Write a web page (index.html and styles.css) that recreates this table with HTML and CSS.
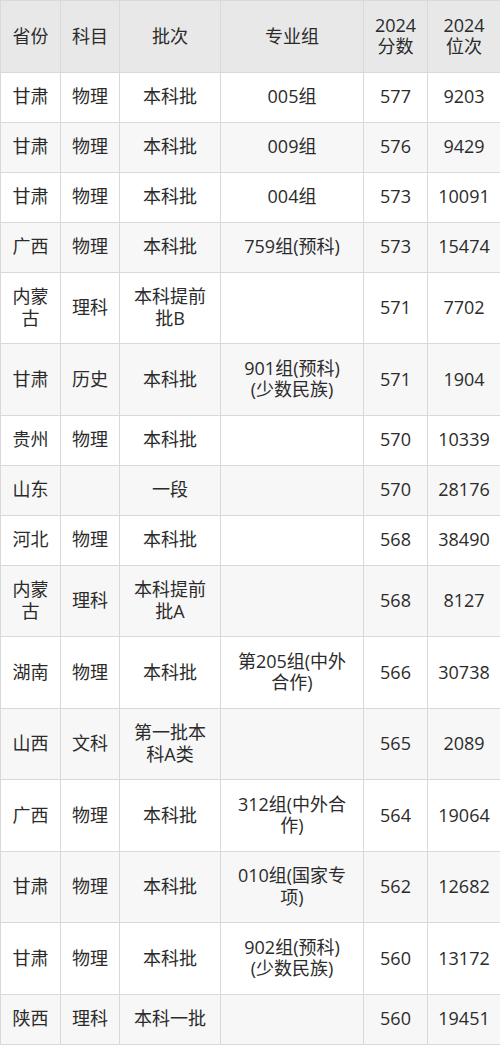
FILE: index.html
```html
<!DOCTYPE html>
<html lang="zh-CN">
<head>
<meta charset="utf-8">
<title>分数位次</title>
<link rel="stylesheet" href="styles.css">
</head>
<body>
<table class="score-table">
  <colgroup>
    <col class="c-prov"><col class="c-subj"><col class="c-batch"><col class="c-group"><col class="c-score"><col class="c-rank">
  </colgroup>
  <thead>
    <tr><th>省份</th><th>科目</th><th>批次</th><th>专业组</th><th>2024<br>分数</th><th>2024<br>位次</th></tr>
  </thead>
  <tbody>
    <tr><td>甘肃</td><td>物理</td><td>本科批</td><td>005组</td><td>577</td><td>9203</td></tr>
    <tr><td>甘肃</td><td>物理</td><td>本科批</td><td>009组</td><td>576</td><td>9429</td></tr>
    <tr><td>甘肃</td><td>物理</td><td>本科批</td><td>004组</td><td>573</td><td>10091</td></tr>
    <tr><td>广西</td><td>物理</td><td>本科批</td><td>759组(预科)</td><td>573</td><td>15474</td></tr>
    <tr><td>内蒙<br>古</td><td>理科</td><td>本科提前<br>批B</td><td></td><td>571</td><td>7702</td></tr>
    <tr><td>甘肃</td><td>历史</td><td>本科批</td><td>901组(预科)<br>(少数民族)</td><td>571</td><td>1904</td></tr>
    <tr><td>贵州</td><td>物理</td><td>本科批</td><td></td><td>570</td><td>10339</td></tr>
    <tr><td>山东</td><td></td><td>一段</td><td></td><td>570</td><td>28176</td></tr>
    <tr><td>河北</td><td>物理</td><td>本科批</td><td></td><td>568</td><td>38490</td></tr>
    <tr><td>内蒙<br>古</td><td>理科</td><td>本科提前<br>批A</td><td></td><td>568</td><td>8127</td></tr>
    <tr><td>湖南</td><td>物理</td><td>本科批</td><td>第205组(中外<br>合作)</td><td>566</td><td>30738</td></tr>
    <tr><td>山西</td><td>文科</td><td>第一批本<br>科A类</td><td></td><td>565</td><td>2089</td></tr>
    <tr><td>广西</td><td>物理</td><td>本科批</td><td>312组(中外合<br>作)</td><td>564</td><td>19064</td></tr>
    <tr><td>甘肃</td><td>物理</td><td>本科批</td><td>010组(国家专<br>项)</td><td>562</td><td>12682</td></tr>
    <tr><td>甘肃</td><td>物理</td><td>本科批</td><td>902组(预科)<br>(少数民族)</td><td>560</td><td>13172</td></tr>
    <tr><td>陕西</td><td>理科</td><td>本科一批</td><td></td><td>560</td><td>19451</td></tr>
  </tbody>
</table>
</body>
</html>
```

FILE: styles.css
```css
html, body {
  margin: 0;
  padding: 0;
  background: #ffffff;
}
.score-table {
  width: 500px;
  table-layout: fixed;
  border-collapse: collapse;
  font-family: "Open Sans", "Noto Sans CJK SC", sans-serif;
  font-size: 18px;
  line-height: 21.5px;
  color: #2b2b2b;
}
.c-prov { width: 60px; }
.c-subj { width: 59px; }
.c-batch { width: 101px; }
.c-group { width: 143px; }
.c-score { width: 64px; }
.c-rank { width: 73px; }
.score-table th,
.score-table td {
  border: 1px solid #d9d9d9;
  padding: 13.75px 2px;
  text-align: center;
  vertical-align: middle;
  font-weight: normal;
}
.score-table thead th {
  background: #e8e8e8;
}
.score-table tbody tr:nth-child(even) td {
  background: #f7f7f7;
}
```
